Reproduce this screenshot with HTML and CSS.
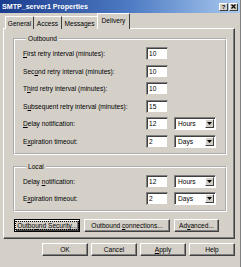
FILE: index.html
```html
<!DOCTYPE html>
<html lang="en">
<head>
    <meta charset="UTF-8">
    <title>SMTP_server1 Properties</title>
    <link rel="stylesheet" href="styles.css">
</head>
<body>
    <div class="window">
        <div class="titlebar">
            <span class="title">SMTP_server1 Properties</span>
            <div class="caption-btns">
                <span class="cbtn">?</span>
                <span class="cbtn">
                    <svg width="5" height="5" viewBox="0 0 5 5"><path d="M0.5 0.5 L4.5 4.5 M4.5 0.5 L0.5 4.5" stroke="#000" stroke-width="1.2"/></svg>
                </span>
            </div>
        </div>
        <div class="content">
            <div class="tabs">
                <div class="tab tab-general">General</div>
                <div class="tab tab-access">Access</div>
                <div class="tab tab-messages">Messages</div>
                <div class="tab tab-delivery active">Delivery</div>
            </div>
            <div class="panel">
                <fieldset class="group outbound">
                    <legend>Outbound</legend>
                    <div class="rows">
                        <label><u>F</u>irst retry interval (minutes):</label>
                        <span class="field">10</span>
                        <span></span>

                        <label>Sec<u>o</u>nd retry interval (minutes):</label>
                        <span class="field">10</span>
                        <span></span>

                        <label>T<u>h</u>ird retry interval (minutes):</label>
                        <span class="field">10</span>
                        <span></span>

                        <label>S<u>u</u>bsequent retry interval (minutes):</label>
                        <span class="field">15</span>
                        <span></span>

                        <label><u>D</u>elay notification:</label>
                        <span class="field">12</span>
                        <span class="combo"><span class="combo-text">Hours</span><span class="combo-btn"><svg width="5" height="3" viewBox="0 0 5 3"><path d="M0 0 H5 L2.5 3 Z" fill="#000"/></svg></span></span>

                        <label>E<u>x</u>piration timeout:</label>
                        <span class="field">2</span>
                        <span class="combo"><span class="combo-text">Days</span><span class="combo-btn"><svg width="5" height="3" viewBox="0 0 5 3"><path d="M0 0 H5 L2.5 3 Z" fill="#000"/></svg></span></span>
                    </div>
                </fieldset>

                <fieldset class="group local">
                    <legend>Local</legend>
                    <div class="rows">
                        <label>Delay <u>n</u>otification:</label>
                        <span class="field">12</span>
                        <span class="combo"><span class="combo-text">Hours</span><span class="combo-btn"><svg width="5" height="3" viewBox="0 0 5 3"><path d="M0 0 H5 L2.5 3 Z" fill="#000"/></svg></span></span>

                        <label>E<u>x</u>piration timeout:</label>
                        <span class="field">2</span>
                        <span class="combo"><span class="combo-text">Days</span><span class="combo-btn"><svg width="5" height="3" viewBox="0 0 5 3"><path d="M0 0 H5 L2.5 3 Z" fill="#000"/></svg></span></span>
                    </div>
                </fieldset>

                <div class="panel-buttons">
                    <button class="btn btn-security focused"><span class="focus-ring">Outbo<u>u</u>nd Security...</span></button>
                    <button class="btn btn-connections"><span>Outbound <u>c</u>onnections...</span></button>
                    <button class="btn btn-advanced"><span>Ad<u>v</u>anced...</span></button>
                </div>
            </div>
            <div class="dialog-buttons">
                <button class="btn btn-dlg"><span>OK</span></button>
                <button class="btn btn-dlg"><span>Cancel</span></button>
                <button class="btn btn-dlg"><span><u>A</u>pply</span></button>
                <button class="btn btn-dlg"><span>Help</span></button>
            </div>
        </div>
    </div>
</body>
</html>
```

FILE: styles.css
```css
* {
    box-sizing: border-box;
}
body {
    margin: 0;
    padding: 0;
    background-color: #d4d0c8;
    font-family: "Liberation Sans", Arial, sans-serif;
    font-size: 6.6px;
    color: #000;
}
u {
    text-decoration-thickness: 1px;
    text-underline-offset: 1px;
}
.window {
    width: 241px;
    height: 267px;
    background-color: #d4d0c8;
    border-right: 1px solid #808080;
    display: flex;
    flex-direction: column;
    overflow: hidden;
}
.titlebar {
    height: 13px;
    background: linear-gradient(to right, #1b3c8e, #4f7cc4 55%, #a9c9ee);
    display: flex;
    align-items: center;
    justify-content: space-between;
    padding: 0 2px 0 2px;
}
.title {
    color: #fff;
    font-weight: bold;
    font-size: 7.1px;
}
.caption-btns {
    display: flex;
    gap: 1px;
}
.cbtn {
    width: 9px;
    height: 8px;
    background-color: #d4d0c8;
    border-top: 1px solid #fff;
    border-left: 1px solid #fff;
    border-right: 1px solid #404040;
    border-bottom: 1px solid #404040;
    display: flex;
    align-items: center;
    justify-content: center;
    font-size: 6px;
    font-weight: bold;
    line-height: 1;
}
.content {
    flex: 1;
    display: flex;
    flex-direction: column;
    padding: 1px 5px 0 3px;
}
.tabs {
    height: 15px;
    display: flex;
    align-items: flex-end;
    padding-left: 2px;
    position: relative;
    z-index: 1;
    margin-bottom: -1px;
}
.tab {
    height: 13px;
    border-top: 1px solid #fff;
    border-left: 1px solid #fff;
    border-right: 1px solid #404040;
    border-top-left-radius: 1px;
    border-top-right-radius: 1px;
    display: flex;
    align-items: center;
    justify-content: center;
    background-color: #d4d0c8;
}
.tab-general { width: 29px; }
.tab-access { width: 28px; border-left: none; }
.tab-messages { width: 36px; border-left: none; }
.tab-delivery { width: 33px; }
.tab.active {
    height: 16px;
    margin-left: -1px;
    padding-bottom: 2px;
}
.panel {
    height: 211px;
    background-color: #d4d0c8;
    border-top: 1px solid #fff;
    border-left: 1px solid #fff;
    border-right: 1px solid #404040;
    border-bottom: 1px solid #404040;
    box-shadow: inset -1px -1px 0 #808080;
    padding: 6px 7px 0 9px;
    display: flex;
    flex-direction: column;
}
.group {
    margin: 0;
    padding: 4px 9px 5px 8px;
    border: 2px groove #fff;
    min-width: 0;
}
.group legend {
    padding: 0 2px;
    margin-left: 3px;
    line-height: 8px;
    height: 8px;
}
.local {
    margin-top: 8px;
}
.rows {
    display: grid;
    grid-template-columns: 1fr 22px 42px;
    grid-auto-rows: 13px;
    column-gap: 6px;
    row-gap: 4.5px;
    align-items: center;
}
.rows label {
    line-height: 13px;
    white-space: nowrap;
}
.field {
    height: 13px;
    background-color: #fff;
    border-top: 1px solid #808080;
    border-left: 1px solid #808080;
    border-right: 1px solid #d4d0c8;
    border-bottom: 1px solid #d4d0c8;
    box-shadow: inset 1px 1px 0 #404040;
    padding: 1px 0 0 2px;
    line-height: 10px;
}
.combo {
    height: 13px;
    background-color: #fff;
    border-top: 1px solid #808080;
    border-left: 1px solid #808080;
    border-right: 1px solid #fff;
    border-bottom: 1px solid #fff;
    box-shadow: inset 1px 1px 0 #404040;
    display: flex;
    padding: 1px;
}
.combo-text {
    flex: 1;
    padding-left: 2px;
    line-height: 10px;
}
.combo-btn {
    width: 9px;
    background-color: #d4d0c8;
    border-top: 1px solid #fff;
    border-left: 1px solid #fff;
    border-right: 1px solid #404040;
    border-bottom: 1px solid #404040;
    display: flex;
    align-items: center;
    justify-content: center;
}
.btn {
    height: 13px;
    margin: 0;
    padding: 0;
    font-family: inherit;
    font-size: inherit;
    color: #000;
    background-color: #d4d0c8;
    border-top: 1px solid #fff;
    border-left: 1px solid #fff;
    border-right: 1px solid #404040;
    border-bottom: 1px solid #404040;
    box-shadow: inset -1px -1px 0 #808080;
    text-align: center;
    white-space: nowrap;
    line-height: 9px;
}
.btn.focused {
    border: 1px solid #000;
    box-shadow: inset 1px 1px 0 #fff, inset -1px -1px 0 #404040, inset -2px -2px 0 #808080;
}
.focus-ring {
    display: inline-block;
    outline: 1px dotted #000;
    outline-offset: 0;
    padding: 0 1px;
    line-height: 7px;
}
.panel-buttons {
    display: flex;
    margin-top: 7px;
    padding-left: 1px;
    gap: 4px;
}
.btn-security { width: 66px; }
.btn-connections { width: 86px; }
.btn-advanced { width: 45px; }
.dialog-buttons {
    display: flex;
    justify-content: flex-end;
    gap: 3px;
    margin-top: 4px;
}
.btn-dlg {
    width: 46px;
}
```
